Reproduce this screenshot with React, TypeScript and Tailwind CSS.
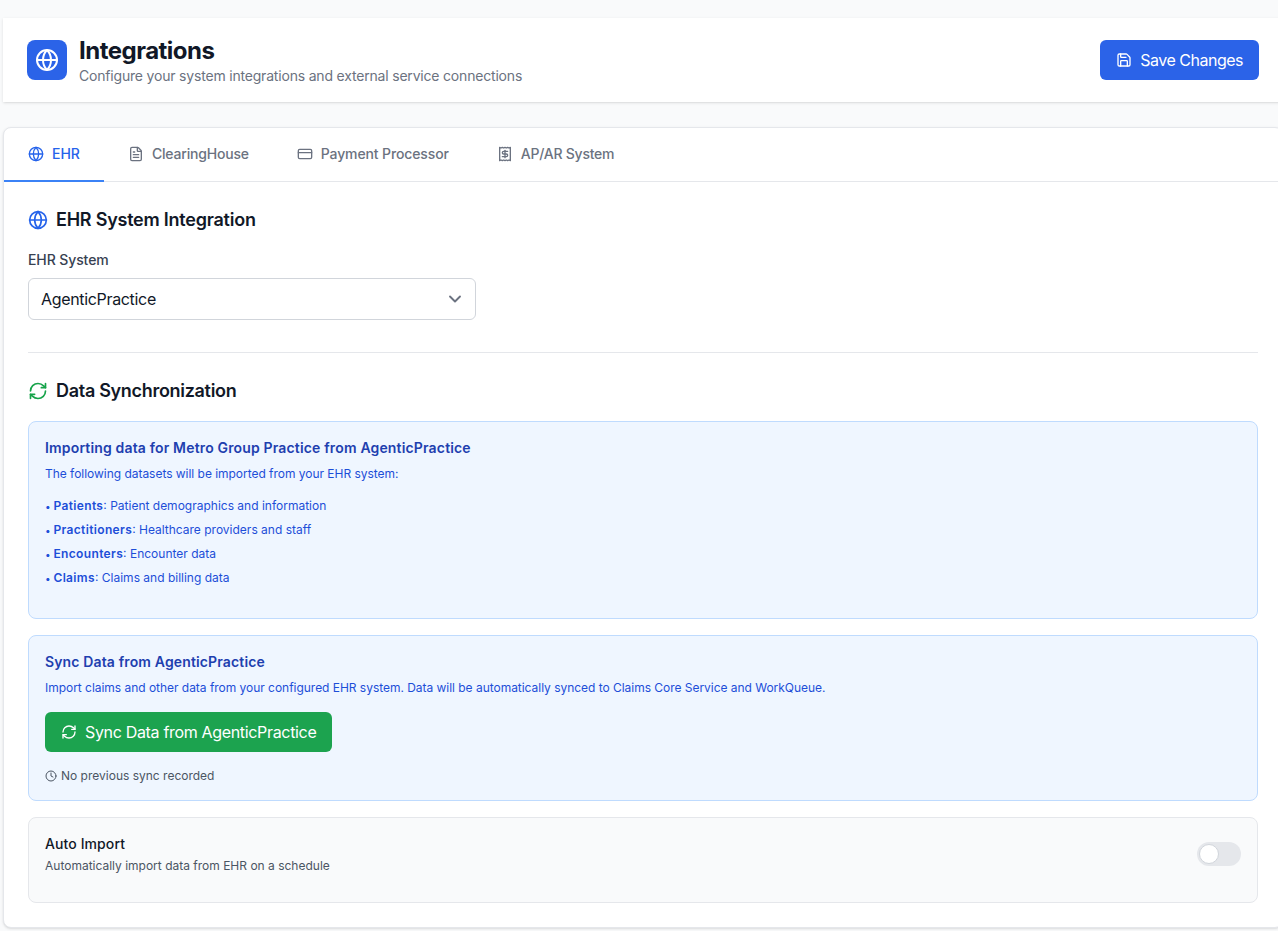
import { ChevronDown, Clock, CreditCard, FileText, Globe, Receipt, RefreshCw, Save } from 'lucide-react';

const tabs = [
	{ label: 'EHR', icon: Globe, active: true, tracking: 'tracking-normal' },
	{ label: 'ClearingHouse', icon: FileText, active: false, tracking: 'tracking-[-0.2px]' },
	{ label: 'Payment Processor', icon: CreditCard, active: false, tracking: 'tracking-[-0.12px]' },
	{ label: 'AP/AR System', icon: Receipt, active: false, tracking: 'tracking-[-0.25px]' },
];

const datasets = [
	{ name: 'Patients', description: 'Patient demographics and information' },
	{ name: 'Practitioners', description: 'Healthcare providers and staff' },
	{ name: 'Encounters', description: 'Encounter data' },
	{ name: 'Claims', description: 'Claims and billing data' },
];

export default function App() {
	return (
		<div className="h-[931px] overflow-hidden bg-[#f9fafb] font-['Inter',sans-serif] text-[#111827]">
			<div className="ml-[3px] w-[1280px] pt-[18px]">
				{/* Page header */}
				<header className="flex items-center justify-between bg-white px-6 py-4 shadow-sm">
					<div className="flex items-center gap-3">
						<div className="flex h-10 w-10 items-center justify-center rounded-lg bg-[#2b63e8]">
							<Globe className="h-6 w-6 text-white" />
						</div>
						<div>
							<h1 className="pt-[2px] text-2xl font-bold leading-[30px] tracking-[-0.5px]">Integrations</h1>
							<p className="text-sm leading-5 tracking-[-0.19px] text-[#6b7280]">
								Configure your system integrations and external service connections
							</p>
						</div>
					</div>
					<button className="flex h-10 items-center gap-2 rounded-md bg-[#2b63e8] px-4 text-base tracking-[-0.5px] text-white">
						<Save className="h-4 w-4" />
						Save Changes
					</button>
				</header>

				<main className="mt-[25px] rounded-lg border border-[#e5e7eb] bg-white shadow-sm">
					{/* Tabs */}
					<nav className="flex border-b border-[#e5e7eb]">
						{tabs.map((tab) => (
							<button
								key={tab.label}
								className={`-mb-px flex h-[54px] items-center gap-2 border-b-2 px-6 text-sm font-medium ${tab.tracking} ${
									tab.active
										? 'border-[#3b82f6] text-[#2563eb]'
										: 'border-transparent text-[#6b7280]'
								}`}
							>
								<tab.icon className="h-4 w-4" />
								{tab.label}
							</button>
						))}
					</nav>

					<div className="p-6">
						{/* EHR system */}
						<h2 className="flex items-center gap-2 text-lg font-semibold leading-7 tracking-[-0.23px]">
							<Globe className="h-5 w-5 text-[#2563eb]" />
							EHR System Integration
						</h2>
						<label className="mt-4 block text-sm font-medium leading-5 tracking-[-0.1px] text-[#374151]">
							EHR System
						</label>
						<div className="relative mt-2 w-[448px]">
							<select className="h-[42px] w-full appearance-none rounded-md border border-[#d1d5db] bg-white px-3 text-base tracking-[-0.33px] text-[#111827]">
								<option>AgenticPractice</option>
							</select>
							<ChevronDown
								strokeWidth={2.25}
								className="pointer-events-none absolute right-[11px] top-[11px] h-5 w-5 text-[#6b7280]"
							/>
						</div>

						<hr className="mt-8 border-[#e5e7eb]" />

						{/* Data sync */}
						<h2 className="mt-6 flex items-center gap-2 text-lg font-semibold leading-7 tracking-[-0.3px]">
							<RefreshCw className="h-5 w-5 text-[#16a34a]" />
							Data Synchronization
						</h2>

						<div className="mt-4 rounded-lg border border-[#bfdbfe] bg-[#eff6ff] p-4 pb-8">
							<h3 className="text-sm font-semibold leading-5 tracking-[0.16px] text-[#1e40af]">
								Importing data for Metro Group Practice from AgenticPractice
							</h3>
							<p className="mt-2 text-xs leading-4 tracking-[-0.03px] text-[#1d4ed8]">
								The following datasets will be imported from your EHR system:
							</p>
							<ul className="mt-4 flex flex-col gap-2 text-xs text-[#1d4ed8]">
								{datasets.map((item) => (
									<li key={item.name} className="flex h-4 items-center whitespace-pre">
										<span className="text-[10px] leading-none">• </span>
										<strong className="font-semibold tracking-[0.35px]">{item.name}</strong>
										<span>: {item.description}</span>
									</li>
								))}
							</ul>
						</div>

						<div className="mt-4 rounded-lg border border-[#bfdbfe] bg-[#eff6ff] p-4">
							<h3 className="text-sm font-semibold leading-5 tracking-[0.14px] text-[#1e40af]">
								Sync Data from AgenticPractice
							</h3>
							<p className="mt-2 text-xs leading-4 tracking-[-0.03px] text-[#1d4ed8]">
								Import claims and other data from your configured EHR system. Data will be
								automatically synced to Claims Core Service and WorkQueue.
							</p>
							<button className="mt-4 flex h-10 items-center gap-2 rounded-md bg-[#1ca34f] px-4 text-base tracking-[-0.33px] text-white">
								<RefreshCw className="h-4 w-4" />
								Sync Data from AgenticPractice
							</button>
							<p className="mt-4 flex items-center gap-1 text-xs leading-4 text-[#4b5563]">
								<Clock className="h-3 w-3" />
								No previous sync recorded
							</p>
						</div>

						<div className="mt-4 flex items-center justify-between rounded-lg border border-[#e5e7eb] bg-[#f9fafb] p-4 pb-7">
							<div>
								<h3 className="text-sm font-medium leading-5 tracking-[0.1px]">Auto Import</h3>
								<p className="mt-1 text-xs leading-4 text-[#4b5563]">
									Automatically import data from EHR on a schedule
								</p>
							</div>
							<button className="flex h-6 w-11 items-center rounded-full bg-[#e5e7eb] px-0.5">
								<span className="h-5 w-5 rounded-full border border-[#d1d5db] bg-white" />
							</button>
						</div>
					</div>
				</main>
			</div>
		</div>
	);
}
